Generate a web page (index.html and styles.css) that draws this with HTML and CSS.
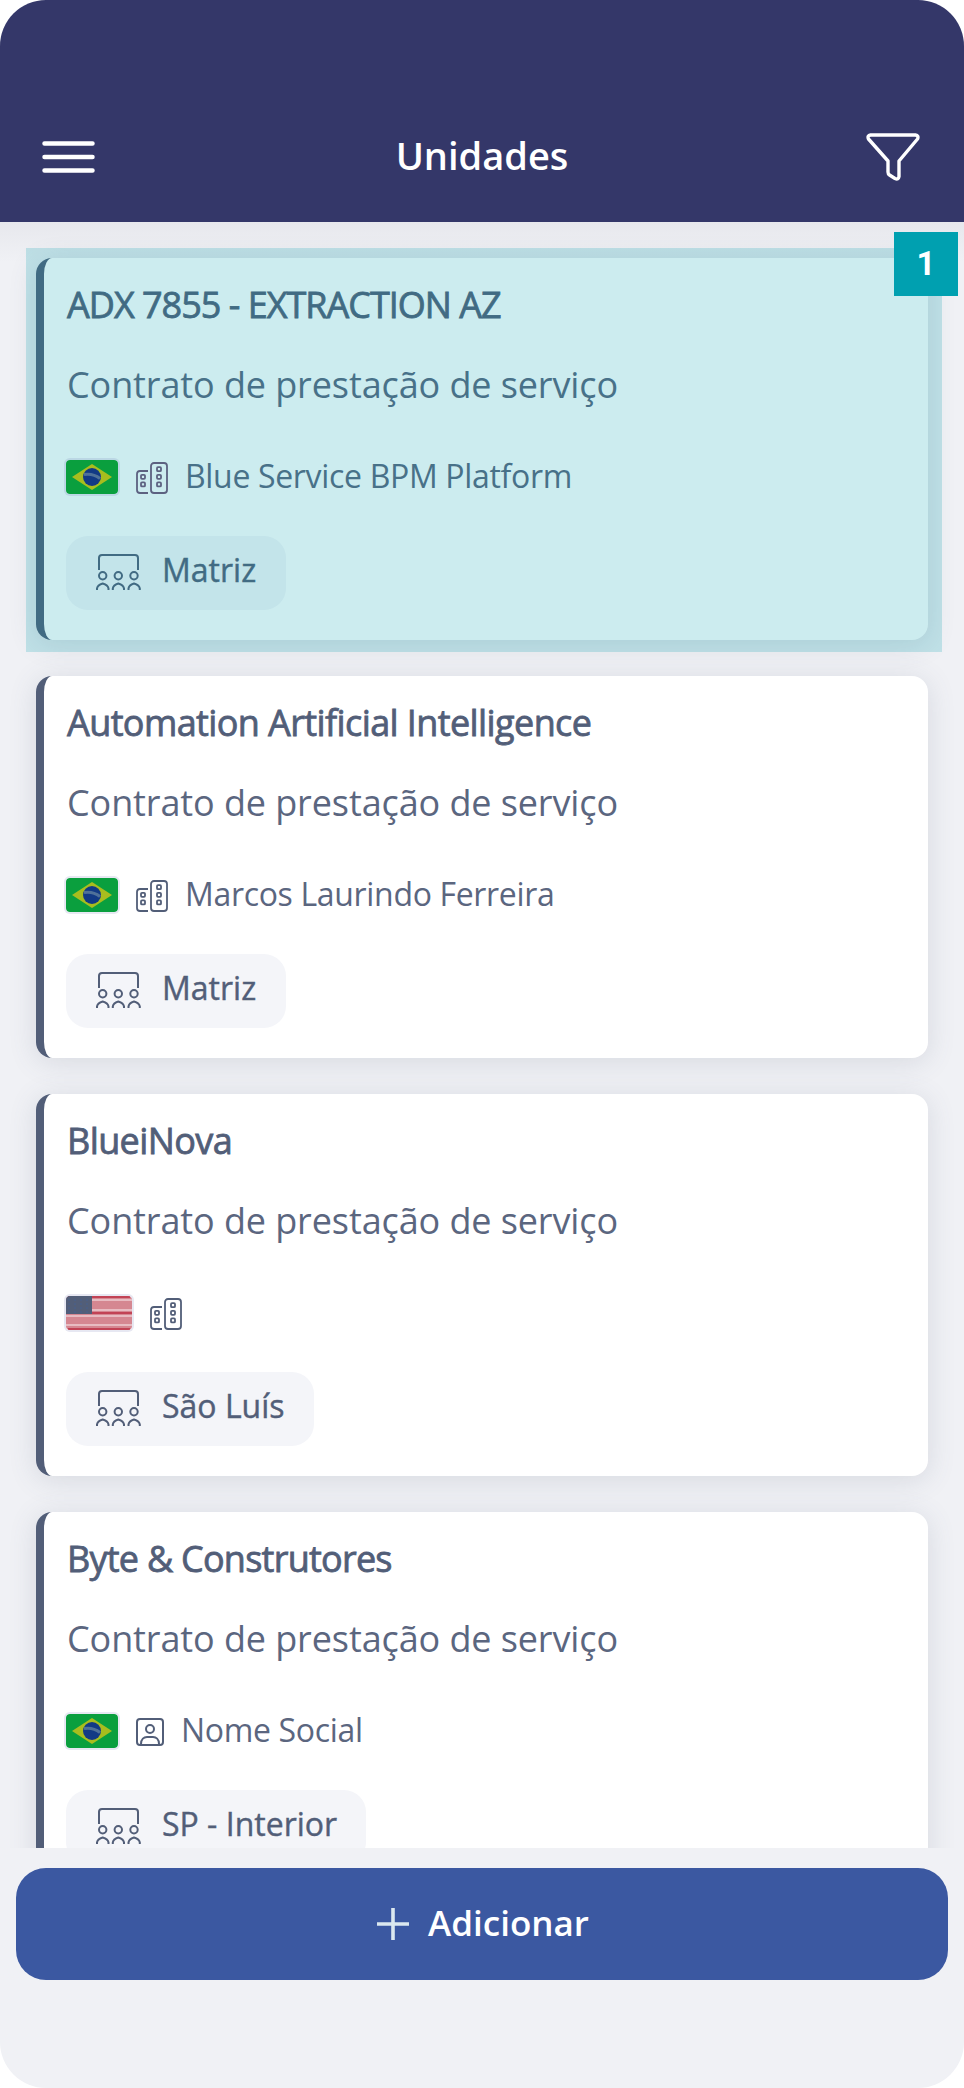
FILE: index.html
```html
<!DOCTYPE html>
<html lang="pt-BR">
<head>
<meta charset="utf-8">
<title>Unidades</title>
<link rel="stylesheet" href="styles.css">
</head>
<body>
<svg class="defs" width="0" height="0" aria-hidden="true">
  <symbol id="br" viewBox="0 0 52 34">
    <rect width="52" height="34" rx="3" fill="#0a9f3e"/>
    <path d="M6 17 26 4 46 17 26 30Z" fill="#a8bd1e"/>
    <circle cx="26" cy="17" r="9" fill="#123a85"/>
    <path d="M18 14.500Q27 13 34 18.500" fill="none" stroke="#4f7199" stroke-width="3"/>
  </symbol>
  <symbol id="us" viewBox="0 0 66 34">
    <rect width="66" height="34" rx="3" fill="#d58791"/>
    <path d="M2 1H64M26 17H66M2 33H64" stroke="#c24355" stroke-width="2"/>
    <path d="M26 4H66M26 14H66M0 20H66M0 29H66" stroke="#e8bcc2" stroke-width="2"/>
    <path d="M2 0H26V18H0V2Q0 0 2 0Z" fill="#525e78"/>
    <path d="M2 4H24M2 8H24M2 12H24M2 16H24" stroke="#46618f" stroke-dasharray="2 4"/>
  </symbol>
  <symbol id="building" viewBox="0 0 32 32">
    <g fill="none" stroke="currentColor" stroke-width="1.800">
      <path d="M12 9H4Q1 9 1 12V28Q1 31 4 31H12"/>
      <rect x="15" y="1" width="16" height="30" rx="3"/>
      <rect x="5" y="12.800" width="4" height="4" rx="1"/>
      <rect x="5" y="20.400" width="4" height="4" rx="1"/>
      <rect x="21" y="5.200" width="4" height="4" rx="1"/>
      <rect x="21" y="12.800" width="4" height="4" rx="1"/>
      <rect x="21" y="20.400" width="4" height="4" rx="1"/>
    </g>
  </symbol>
  <symbol id="person" viewBox="0 0 28 28">
    <g fill="none" stroke="currentColor" stroke-width="2">
      <rect x="1" y="1" width="26" height="26" rx="3"/>
      <circle cx="14" cy="11" r="4"/>
      <path d="M5 26C5 21 8 19 11 19H17C20 19 23 21 23 26"/>
    </g>
  </symbol>
  <symbol id="team" viewBox="0 0 46 36">
    <g fill="none" stroke="currentColor" stroke-width="2">
      <path d="M3 16V4Q3 1 6 1H39Q42 1 42 4V16"/>
      <circle cx="6.700" cy="21.700" r="3.700"/><circle cx="22.300" cy="21.700" r="3.700"/><circle cx="38" cy="21.700" r="3.700"/>
      <path d="M1 36V34.500Q1.500 31 6.700 29.500Q12 31 12.500 34.500V36M16.800 36V34.500Q17.300 31 22.300 29.500Q27.500 31 28 34.500V36M32.500 36V34.500Q33 31 38 29.500Q43.300 31 43.800 34.500V36"/>
    </g>
  </symbol>
</svg>
<div class="screen">
  <header class="header">
    <svg class="menu" viewBox="0 0 54 34"><path d="M2.500 3.500H50.500M2.500 17H50.500M2.500 30.500H50.500" stroke="#fff" stroke-width="4.500" stroke-linecap="round"/></svg>
    <h1 class="heading">Unidades</h1>
    <svg class="filter" viewBox="0 0 54 50" fill="none" stroke="#fff" stroke-width="3.400" stroke-linejoin="round"><path d="M4.500 3H49.500Q53 3.500 51.500 7L33 29V44.500Q32.500 48 29 46.500L23.500 43Q22 42 22 40V29L2.500 7Q1 3.500 4.500 3Z"/></svg>
  </header>
  <main class="list">
    <article class="card card-first">
      <h2 class="title title-caps">ADX 7855 - EXTRACTION AZ</h2>
      <p class="subtitle">Contrato de prestação de serviço</p>
      <div class="owner"><svg class="flag"><use href="#br"/></svg><svg class="building"><use href="#building"/></svg><span>Blue Service BPM Platform</span></div>
      <div class="chip"><svg class="team"><use href="#team"/></svg><span>Matriz</span></div>
      <div class="highlight"></div>
      <span class="badge">1</span>
    </article>
    <article class="card">
      <h2 class="title">Automation Artificial Intelligence</h2>
      <p class="subtitle">Contrato de prestação de serviço</p>
      <div class="owner"><svg class="flag"><use href="#br"/></svg><svg class="building"><use href="#building"/></svg><span>Marcos Laurindo Ferreira</span></div>
      <div class="chip"><svg class="team"><use href="#team"/></svg><span>Matriz</span></div>
    </article>
    <article class="card">
      <h2 class="title">BlueiNova</h2>
      <p class="subtitle">Contrato de prestação de serviço</p>
      <div class="owner"><svg class="flag flag-us"><use href="#us"/></svg><svg class="building"><use href="#building"/></svg></div>
      <div class="chip chip-sl"><svg class="team"><use href="#team"/></svg><span>São Luís</span></div>
    </article>
    <article class="card">
      <h2 class="title title-short">Byte &amp; Construtores</h2>
      <p class="subtitle">Contrato de prestação de serviço</p>
      <div class="owner"><svg class="flag"><use href="#br"/></svg><svg class="person"><use href="#person"/></svg><span>Nome Social</span></div>
      <div class="chip chip-sp"><svg class="team"><use href="#team"/></svg><span>SP - Interior</span></div>
    </article>
  </main>
  <footer class="footer">
    <button class="add"><svg class="plus" viewBox="0 0 32 32"><path d="M0 16H32M16 0V32" stroke="#dbe8ef" stroke-width="3.600"/></svg><span>Adicionar</span></button>
  </footer>
</div>
</body>
</html>
```
FILE: styles.css
```css
* { box-sizing: border-box; }
body { margin: 0; background: #fff; font-family: "Open Sans", "Noto Sans", sans-serif; color: #525e78; }
.defs { position: absolute; }
.screen {
  width: 964px; height: 2088px; display: flex; flex-direction: column;
  background: #f0f1f5; border-radius: 46px; overflow: hidden;
}
.header {
  flex: none; height: 222px; padding: 91px 44px 0 42px; background: #343769;
  display: grid; grid-template-columns: 54px 1fr 54px; align-items: center;
}
.menu { width: 54px; height: 34px; }
.heading { margin: 0 0 3px 2px; text-align: center; font-size: 38px; font-weight: 600; color: #fff; line-height: 50px; }
.filter { width: 54px; height: 50px; }
.list {
  flex: none; height: 1626px; padding: 36px; overflow: hidden;
  display: flex; flex-direction: column; gap: 36px;
  background: linear-gradient(#e7e8ed, #f0f1f5 40px);
}
.card {
  position: relative; flex: none; height: 382px; padding: 22px 30px 30px 22px;
  background: #fff; border-left: 8px solid #525e78; border-radius: 16px;
  box-shadow: 0 4px 28px rgba(82, 94, 120, .16);
  display: flex; flex-direction: column; align-items: flex-start;
}
.title { margin: 0 0 30px 1px; font-size: 36px; line-height: 50px; font-weight: 400; letter-spacing: -.6px; white-space: nowrap; -webkit-text-stroke: .8px currentColor; }
.title-caps { letter-spacing: -1px; }
.title-short { letter-spacing: -.75px; }
.subtitle { margin: 0 0 43px 1px; font-size: 36px; line-height: 50px; letter-spacing: -.1px; white-space: nowrap; color: #5b667f; }
.owner { display: flex; align-items: center; height: 46px; margin-bottom: 37px; font-size: 32px; line-height: 46px; letter-spacing: -.33px; color: #5b667f; }
.flag { width: 52px; height: 34px; margin: 2px 18px 0 0; border-radius: 4px; box-shadow: 0 0 0 2px rgba(82, 94, 160, .14); }
.flag-us { width: 66px; }
.building { width: 32px; height: 32px; margin: 4px 17px 0 0; color: #525e78; }
.person { width: 28px; height: 28px; margin: 4px 17px 0 0; color: #525e78; }
.chip { display: flex; width: 220px; height: 74px; padding: 0 0 8px 30px; align-items: center; border-radius: 22px; background: #f4f5f9; font-size: 32px; -webkit-text-stroke: .4px currentColor; }
.chip-sl { width: 248px; }
.chip-sp { width: 300px; }
.team { width: 46px; height: 36px; margin: 6px 20px 0 0; }
.highlight { position: absolute; left: -18px; top: -10px; width: 916px; height: 404px; background: rgba(0, 160, 176, .2); }
.card-first .flag, .card-first .building { position: relative; z-index: 1; }
.card-first .building { color: #5c6180; }
.badge {
  position: absolute; left: 850px; top: -26px; width: 64px; height: 64px; background: #00a0b0;
  color: #fff; font: 700 33px/63px Roboto, sans-serif; text-align: center; z-index: 2;
}
.footer { padding: 20px 16px; }
.add {
  width: 932px; height: 112px; padding: 0 0 3px 2px; border: 0; border-radius: 30px; background: #3b58a1; color: #fff;
  font: 600 35px/48px "Open Sans", sans-serif; display: flex; justify-content: center; align-items: center; gap: 19px;
}
.plus { width: 32px; height: 32px; margin-top: 3px; }
```
